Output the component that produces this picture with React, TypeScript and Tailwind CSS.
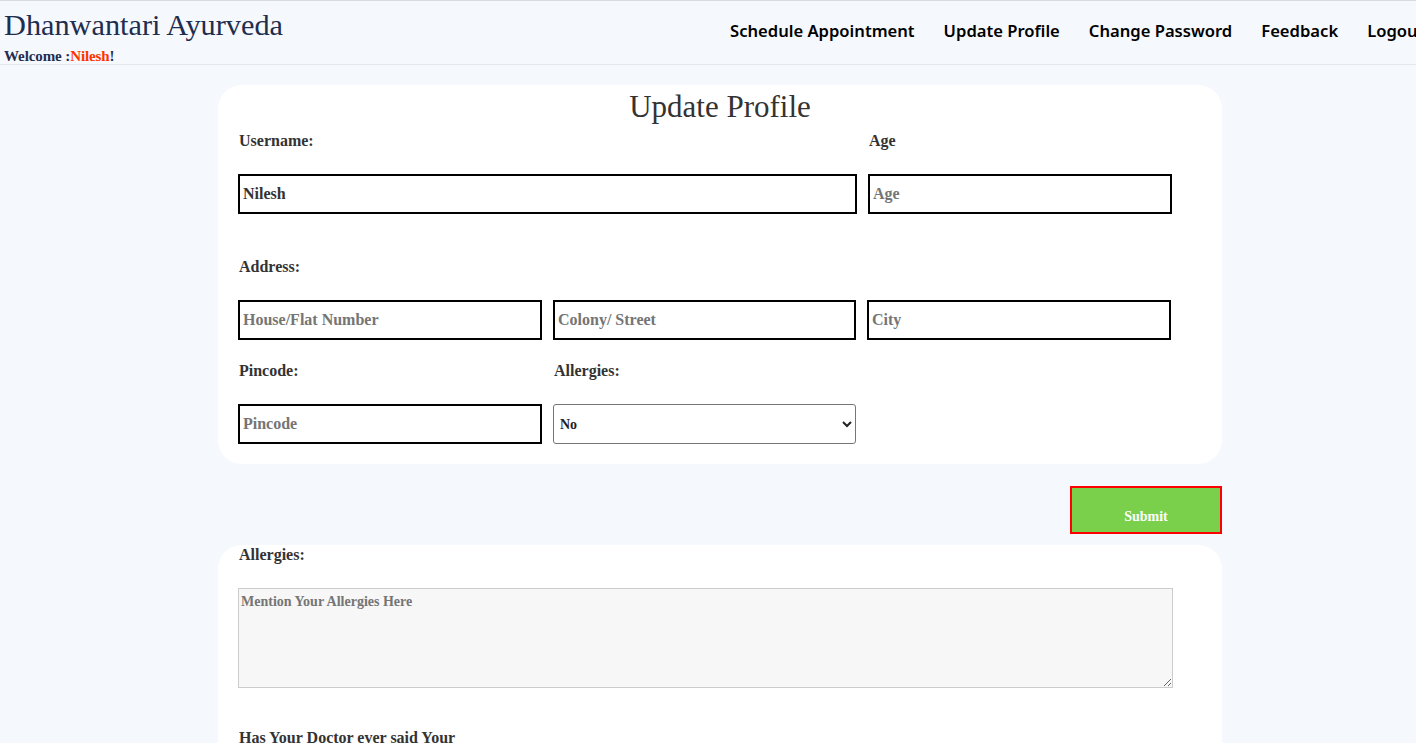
import { useState } from "react";

const serif = "font-['Liberation_Serif',serif]";

function Label({ children, className = "" }: { children: React.ReactNode; className?: string }) {
  return <div className={`h-5 leading-5 text-[16px] font-bold text-[#333] pl-px ${className}`}>{children}</div>;
}

function Field({ placeholder, value, className = "" }: { placeholder: string; value?: string; className?: string }) {
  return (
    <input
      defaultValue={value}
      placeholder={placeholder}
      className={`h-10 border-2 border-black bg-white px-[3px] text-[16px] font-bold text-[#333] placeholder:text-[#757575] outline-none ${className}`}
    />
  );
}

export default function App() {
  const [allergy, setAllergy] = useState("No");

  return (
    <div className={`min-h-screen bg-[#f5f8fd] ${serif}`}>
      {/* top bar */}
      <header className="flex h-[65px] overflow-hidden border-t border-b border-t-[#d8dbe0] border-b-[#e4e7ec]">
        <div className="w-[730px] shrink-0 pl-[4px]">
          <div className="pt-[6px] text-[30.3px] leading-[36px] text-[#1f2d4f]">Dhanwantari Ayurveda</div>
          <div className="mt-[5px] text-[15px] font-bold leading-[16px] tracking-[-0.1px] text-[#1f2d4f]">
            Welcome :<span className="text-[#ff3300]">Nilesh</span>!
          </div>
        </div>
        <nav className="flex shrink-0 items-center gap-[29px] pb-[3px] font-['Noto_Sans',sans-serif] text-[16.6px] font-semibold text-black">
          <a>Schedule Appointment</a>
          <a>Update Profile</a>
          <a>Change Password</a>
          <a>Feedback</a>
          <a>Logout</a>
        </nav>
      </header>

      <main className="ml-[218px] w-[1004px] pt-[20px]">
        {/* profile card */}
        <section className="rounded-[24px] bg-white px-[20px] pt-[4px] pb-[20px]">
          <h1 className="h-[36px] text-center text-[31px] leading-[36px] text-[#333]">Update Profile</h1>

          <div className="mt-[6px] grid grid-cols-[619px_304px] gap-x-[11px]">
            <Label>Username:</Label>
            <Label>Age</Label>
          </div>
          <div className="mt-[23px] grid grid-cols-[619px_304px] gap-x-[11px]">
            <Field placeholder="Username" value="Nilesh" />
            <Field placeholder="Age" />
          </div>

          <Label className="mt-[43px]">Address:</Label>
          <div className="mt-[23px] grid grid-cols-[304px_303px_304px] gap-x-[11px]">
            <Field placeholder="House/Flat Number" />
            <Field placeholder="Colony/ Street" />
            <Field placeholder="City" />
          </div>

          <div className="mt-[21px] grid grid-cols-[304px_303px] gap-x-[11px]">
            <Label>Pincode:</Label>
            <Label>Allergies:</Label>
          </div>
          <div className="mt-[23px] grid grid-cols-[304px_303px] gap-x-[11px]">
            <Field placeholder="Pincode" />
            <select
              value={allergy}
              onChange={(e) => setAllergy(e.target.value)}
              className="h-10 rounded-[3px] border border-[#767676] bg-white px-[2px] text-[14px] font-bold text-[#222]"
            >
              <option>No</option>
              <option>Yes</option>
            </select>
          </div>
        </section>

        <div className="mt-[22px] flex justify-end">
          <button className="h-[48px] w-[152px] border-2 border-[#ff0000] bg-[#7acf4b] pt-[12px] text-[14px] font-bold text-white">
            Submit
          </button>
        </div>

        {/* medical card */}
        <section className="mt-[11px] rounded-t-[24px] bg-white px-[20px] pb-10">
          <Label className="text-[#222]">Allergies:</Label>
          <textarea
            placeholder="Mention Your Allergies Here"
            className="mt-[23px] block h-[100px] w-[935px] border border-[#cccccc] bg-[#f7f7f7] px-[2px] py-[2px] text-[14px] font-bold text-[#333] placeholder:text-[#757575] outline-none"
          />
          <Label className="mt-[40px] text-[#222]">Has Your Doctor ever said Your</Label>
        </section>
      </main>
    </div>
  );
}
